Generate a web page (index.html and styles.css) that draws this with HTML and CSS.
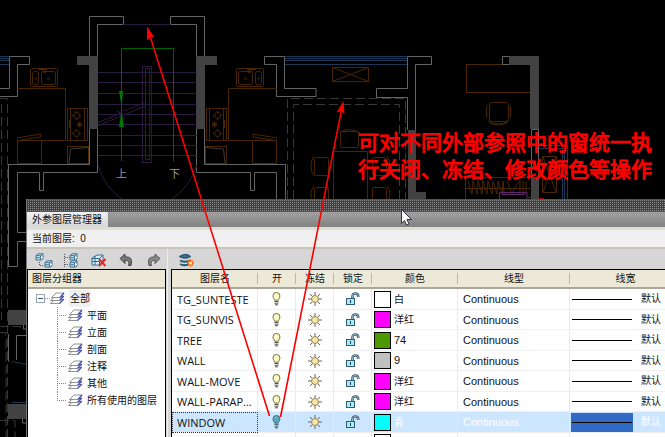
FILE: index.html
```html
<!DOCTYPE html>
<html lang="zh-CN">
<head>
<meta charset="utf-8">
<title>外参图层管理器</title>
<link rel="stylesheet" href="styles.css">
</head>
<body>
<svg width="0" height="0" class="defs" aria-hidden="true">
  <defs>
    <symbol id="bulb" viewBox="0 0 9 14">
      <path d="M2.6 8.2C2.4 6.8 1 6 1 3.9a3.4 3.4 0 0 1 6.9 0C7.900 6 6.500 6.800 6.300 8.200z" fill="#fffbc4" stroke="#77713f"/>
      <path d="M2.500 9.500h4M2.500 11.200h4" stroke="#555"/><path d="M3.200 12.800h2.600" stroke="#333"/>
    </symbol>
    <symbol id="bulb-off" viewBox="0 0 9 14">
      <path d="M2.6 8.200C2.400 6.800 1 6 1 3.900a3.400 3.400 0 0 1 6.900 0C7.900 6 6.500 6.800 6.300 8.200z" fill="#5ba6b8" stroke="#3c7586"/>
      <path d="M2.800 3.200l1-1" stroke="#cdeaf2"/><path d="M2.500 9.500h4M2.500 11.200h4" stroke="#4c6670"/><path d="M3.200 12.800h2.600" stroke="#333"/>
    </symbol>
    <symbol id="sun" viewBox="0 0 14 14">
      <path d="M7 0v3M7 11v3M0 7h3M11 7h3M2 2l2 2M10 10l2 2M12 2l-2 2M4 10l-2 2" stroke="#666"/>
      <circle cx="7" cy="7" r="3.500" fill="#fbe6a0" stroke="#8c8057"/>
    </symbol>
    <symbol id="lock" viewBox="0 0 15 14">
      <path d="M7.500 6V4.500C7.500 2 9 1.500 10.500 1.500S13.300 2.500 13.300 5" fill="none" stroke="#3c5f73" stroke-width="2.600"/>
      <path d="M7.500 6V4.500C7.500 2 9 1.500 10.500 1.500S13.300 2.500 13.300 5" fill="none" stroke="#b7d3e0" stroke-width=".8"/>
      <rect x="1.500" y="6.500" width="8" height="6" fill="#a5ecfa" stroke="#2d5c73"/><path d="M5.500 8v3" stroke="#1c4254"/>
    </symbol>
    <symbol id="sheets" viewBox="0 0 15 13">
      <g fill="#fff" stroke="#777" stroke-width=".8"><path d="M.5 11.500L5 7.500h8.500L9.500 11.500z"/><path d="M.5 8.500L5 4.500h8.500L9.500 8.500z"/><path d="M1.500 5.500L6 1h8L10 5.500z"/></g>
      <path d="M10 5.500L14 1M9.500 8.500l4.300-4.500M9.500 11.500l4.300-4.500" stroke="#4a50a8" stroke-width="1.400"/>
    </symbol>
    <symbol id="group" viewBox="0 0 9 8">
      <path d="M1 2.500L3 .8h5v5L6.500 7H1z" fill="#d7eef8" stroke="#386c8d"/><path d="M1 4.800h4.500M5.500 2.500V7M1 2.700h4.500L8 1" fill="none" stroke="#386c8d"/>
      <path d="M5.800 4.500h2" stroke="#fff"/>
    </symbol>
  </defs>
</svg>

<svg class="drawing" viewBox="0 0 665 437" width="665" height="437" aria-hidden="true">
  <defs>
    <g id="unit">
      <path class="blue" d="M-113 56.500H9M-113 58.500H9M-113 60.500H9M-113 64.500H9"/>
      <path class="wall" d="M9.500 56.500H29.500V64.500H17.500V96.500H-22V88.500H9.500z"/>
      <g class="brown">
        <rect x="30.500" y="68.500" width="27" height="18" rx="1"/>
        <rect x="32.500" y="71.500" width="6" height="13" rx="2"/><rect x="41.500" y="71.500" width="14" height="13" rx="2"/>
        <circle cx="35.500" cy="78.500" r="1"/><circle cx="48.500" cy="78.500" r="1"/>
        <path d="M38 69.500h9M40 69l6 4M44 73l2-4M17 88.500H65.500V140.500H17.500M17.500 139.500V163.500H41.500V139.500M17 138l24-4v3l-20 3"/>
        <rect x="67.500" y="108.500" width="20" height="32"/><path d="M70.500 109v31M84.500 109v31M69.500 120v8"/>
        <circle cx="76.500" cy="115.500" r="3"/><circle cx="79.500" cy="124.500" r="2"/><circle cx="76.500" cy="133.500" r="3"/>
        <path d="M76.500 111v2M76.500 118v2M72 115.500h2M79 115.500h2M76.500 129v2M76.500 136v2M72 133.500h2M79 133.500h2M77 124.500h5M79.500 122v5"/>
        <rect x="67.500" y="146.500" width="21" height="17"/>
      </g>
      <path class="dim" d="M69 163l1.500-14 18-1.500"/>
      <path class="wall" d="M97.500 56V24.500H123.500V16.500H89.500V56M89.500 129V164.500H8.500M97.500 129V172.500H43.500V190.500H39.500V172.500H17.500V200"/>
      <path class="fill" d="M77 56h21v73h-9V65H77z"/>
    </g>
  </defs>
  <use href="#unit"/>
  <use href="#unit" transform="matrix(-1 0 0 1 294 0)"/>
  <path class="wall" d="M8.500 164V266.500H17.500V241.500H27M17.500 200V232.500H27M8.500 334V361.500M16.500 360V335.500H27M23.500 325v4h4M22.500 419v4h5M285.500 164V199"/>
  <path class="fill" d="M8 310h19v15H8zM8 404h19v15H8z"/>
  <path class="blue" d="M12 361.500l15 3M12 402.500h15"/>
  <path class="dash" d="M0 98.500H7.500V437M1.500 104V320M0 326.500H20.500V332M0 332.500H6V437M0 420.500H15V437M287.500 199V98.500H405.500V199M293.500 199V104.500H399.500V199"/>
  <g class="purple">
    <path d="M123 24.500H171M98 72.500H197M98 82.500H197M98 93.500H197M98 104.500H197M98 114.500H197M98 124.500H197M98 135.500H197M98 145.500H197M98 155.500H197M98 122.500L119 114M98 125.500l22-9 2-6M145 102.500L124 111M145 106l-21 9-7-4 8 8"/>
    <path d="M98 165Q104 187 122 199M197 165Q190 187 172 199"/>
    <rect x="142.500" y="66.500" width="9" height="96"/><rect x="145.500" y="68.500" width="4" height="91"/>
  </g>
  <path class="green" d="M121.500 161V48.500H173.500V161"/>
  <path d="M119 91h4l-1 12h-1zM121 114h1l2 13h-5z" fill="#007800"/>
  <text class="stair" x="116" y="178">上</text><text class="stair" x="169" y="178">下</text>
  <g class="brown">
    <path d="M332.500 67.500h36v14h-36zM332.500 67.500l36 14M368.500 67.500l-36 14M333.500 200V151.500H367.500V200"/>
    <rect x="340.500" y="131.500" width="18" height="16" rx="2"/><path d="M339 133q10-7 21 0"/>
    <rect x="314.500" y="157.500" width="14" height="18" rx="2"/><path d="M314 156q-6 10 0 20"/>
    <rect x="314.500" y="187.500" width="14" height="18" rx="2"/><path d="M314 186q-5 7-2 13"/>
    <rect x="372.500" y="157.500" width="14" height="18" rx="2"/><path d="M387 156q6 10 0 20"/>
    <rect x="372.500" y="187.500" width="14" height="18" rx="2"/><path d="M387 186q5 7 2 13"/>
    <rect x="466.500" y="64.500" width="64" height="28"/>
    <rect x="489.500" y="102.500" width="19" height="19" rx="3"/><rect x="486.500" y="105.500" width="3" height="12" rx="1"/><rect x="508.500" y="105.500" width="2" height="12" rx="1"/><path d="M488 121q10 6 21 0M490 123q8 4 17 0"/>
    <path d="M465.500 200V177.500H530M465 188.500H530"/>
    <path d="M468 181l4 13 1-13 4 13 1-13 4 13 1-13 4 13 1-13 4 13 1-13 4 13 1-13 4 13 1-13 1 13M507 181l5 13 3-7 5-6v13M523 181v13M526 181v13"/>
    <path d="M542.500 156.500h14v36h-14zM543 157l13 35M556 157l-13 35"/>
  </g>
  <path class="wall" d="M407.500 130V97.500H376.500V88.500H407.500V56.500H431.500V64.500H415.500V130M509 64.500H502.500V56.500H509M531.500 129.500V177M538.500 177V129.500H531.500"/>
  <path class="fill" d="M408 130h8v62h10v8h-18zM509 56h30v73h-9V65h-21zM531 177h8v22h-8z"/>
  <path class="blue" d="M539 145.500H567.500V199M539 148.500H564.500V199M562.500 149V199"/>
  <path d="M499.500 199V192.500H527V199M502 194.500h23" fill="none" stroke="#5c2866"/>
  <path d="M528 197.500h3M539 198.500h5" stroke="#a00"/>
</svg>

<p class="note">可对不同外部参照中的窗统一执<br>行关闭、冻结、修改颜色等操作</p>

<main class="panel">
  <div class="grip"></div>
  <header class="titlebar"><h1>外参图层管理器</h1></header>
  <div class="current">当前图层: &nbsp;0</div>
  <div class="work">
    <section class="groups">
      <div class="toolbar">
        <button aria-label="新建组"><svg width="18" height="15"><use href="#group" x="0" y="0" width="9" height="8"/><use href="#group" x="9" y="7" width="9" height="8"/><path d="M4.500 9v3.500h4" fill="none" stroke="#555" stroke-dasharray="1 1"/></svg></button>
        <button aria-label="展开组"><svg width="18" height="15"><use href="#group" x="6" y="0" width="9" height="8"/><use href="#group" x="6" y="7" width="9" height="8"/><path d="M1.500 1v13M2 4.500h4M2 11.500h4" fill="none" stroke="#555" stroke-dasharray="1 1"/></svg></button>
        <button aria-label="删除组"><svg width="18" height="15"><path d="M1 5l5-3h6v7l-3 3H1z" fill="#d5edf6" stroke="#386c8d"/><path d="M1 5.500h7.500L12 2M1 8.500h8M8.500 5.500V12M4 3v9" fill="none" stroke="#386c8d"/><path d="M8 6l6.500 7M14.500 6L8 13" stroke="#e22" stroke-width="2"/></svg></button>
        <button aria-label="撤销"><svg width="18" height="15"><path d="M1 5.500L6 1v3h2c4 0 5.500 3 4 8.500H9.500C10.500 9 10 7.500 7.500 7.500H6v3z" fill="#777" stroke="#444"/></svg></button>
        <button aria-label="重做"><svg width="18" height="15"><path d="M13 5.500L8 1v3H6C2 4 .5 7 2 12.500H4.500C3.500 9 4 7.500 6.500 7.500H8v3z" fill="#888" stroke="#555"/></svg></button>
      </div>
      <div class="pane">
        <h2>图层分组器</h2>
        <div class="tree">
          <div class="root"><button class="fold" aria-label="折叠"></button><i></i><svg width="15" height="13"><use href="#sheets"/></svg><span>全部</span></div>
          <ul>
            <li><svg width="15" height="13"><use href="#sheets"/></svg>平面</li>
            <li><svg width="15" height="13"><use href="#sheets"/></svg>立面</li>
            <li><svg width="15" height="13"><use href="#sheets"/></svg>剖面</li>
            <li><svg width="15" height="13"><use href="#sheets"/></svg>注释</li>
            <li><svg width="15" height="13"><use href="#sheets"/></svg>其他</li>
            <li><svg width="15" height="13"><use href="#sheets"/></svg>所有使用的图层</li>
          </ul>
        </div>
      </div>
    </section>
    <section class="layers">
      <div class="toolbar">
        <button aria-label="图层设置"><svg width="18" height="15"><path d="M1 3.500q6-4 10 0-5 3-10 0zM1 7.500q5 3 10 0M1 11q5 3 9 0" fill="#3b6f8a" stroke="#2f5d78" stroke-width="1.600"/><path d="M11.500 6v8M8 10h7M9 7.500l5 5M14 7.500l-5 5" stroke="#f36a1c" stroke-width="1.300"/><circle cx="11.500" cy="10" r="1.500" fill="#fff3a0"/></svg></button>
      </div>
      <div class="pane">
        <table>
          <colgroup><col class="c-name"><col class="c-icon"><col class="c-icon"><col class="c-icon"><col class="c-color"><col class="c-type"><col></colgroup>
          <thead><tr><th>图层名</th><th>开</th><th>冻结</th><th>锁定</th><th>颜色</th><th>线型</th><th class="last">线宽</th></tr></thead>
          <tbody>
            <tr><td class="name">TG_SUNTESTE</td><td><svg width="9" height="14"><use href="#bulb"/></svg></td><td><svg width="14" height="14"><use href="#sun"/></svg></td><td><svg width="15" height="14"><use href="#lock"/></svg></td><td><div class="color"><b class="white"></b>白</div></td><td class="type">Continuous</td><td><div class="weight"><i></i>默认</div></td></tr>
            <tr><td class="name">TG_SUNVIS</td><td><svg width="9" height="14"><use href="#bulb"/></svg></td><td><svg width="14" height="14"><use href="#sun"/></svg></td><td><svg width="15" height="14"><use href="#lock"/></svg></td><td><div class="color"><b class="magenta"></b>洋红</div></td><td class="type">Continuous</td><td><div class="weight"><i></i>默认</div></td></tr>
            <tr><td class="name">TREE</td><td><svg width="9" height="14"><use href="#bulb"/></svg></td><td><svg width="14" height="14"><use href="#sun"/></svg></td><td><svg width="15" height="14"><use href="#lock"/></svg></td><td><div class="color num"><b class="olive"></b>74</div></td><td class="type">Continuous</td><td><div class="weight"><i></i>默认</div></td></tr>
            <tr><td class="name">WALL</td><td><svg width="9" height="14"><use href="#bulb"/></svg></td><td><svg width="14" height="14"><use href="#sun"/></svg></td><td><svg width="15" height="14"><use href="#lock"/></svg></td><td><div class="color num"><b class="silver"></b>9</div></td><td class="type">Continuous</td><td><div class="weight"><i></i>默认</div></td></tr>
            <tr><td class="name">WALL-MOVE</td><td><svg width="9" height="14"><use href="#bulb"/></svg></td><td><svg width="14" height="14"><use href="#sun"/></svg></td><td><svg width="15" height="14"><use href="#lock"/></svg></td><td><div class="color"><b class="magenta"></b>洋红</div></td><td class="type">Continuous</td><td><div class="weight"><i></i>默认</div></td></tr>
            <tr><td class="name">WALL-PARAP...</td><td><svg width="9" height="14"><use href="#bulb"/></svg></td><td><svg width="14" height="14"><use href="#sun"/></svg></td><td><svg width="15" height="14"><use href="#lock"/></svg></td><td><div class="color"><b class="magenta"></b>洋红</div></td><td class="type">Continuous</td><td><div class="weight"><i></i>默认</div></td></tr>
            <tr class="selected"><td class="name">WINDOW</td><td><svg width="9" height="14"><use href="#bulb-off"/></svg></td><td><svg width="14" height="14"><use href="#sun"/></svg></td><td><svg width="15" height="14"><use href="#lock"/></svg></td><td><div class="color"><b class="cyan"></b>青</div></td><td class="type">Continuous</td><td><div class="weight"><i></i>默认</div></td></tr>
            <tr><td></td><td></td><td></td><td></td><td><div class="color"><b class="white"></b></div></td><td></td><td></td></tr>
          </tbody>
        </table>
      </div>
    </section>
  </div>
</main>

<svg class="overlay" viewBox="0 0 665 437" width="665" height="437" aria-hidden="true">
  <path d="M269.500 416L150 36M280.500 417L341.500 110" stroke="#f00" stroke-width="1.600"/>
  <path d="M147 26.500L154.500 37.500 150.500 37 147 40.500zM343.500 101L344.500 114 341 111 336.500 112.500z" fill="#f00"/>
  <path d="M401.500 209.500V223.500L404.500 220.500 406.500 225 409 224 407 219.500H411.500z" fill="#fff" stroke="#34343c"/>
</svg>
</body>
</html>
```

FILE: styles.css
```css
* { box-sizing: border-box; }
body {
  margin: 0;
  height: 100vh;
  display: flex;
  flex-direction: column;
  position: relative;
  overflow: hidden;
  background: #000;
  color: #111;
  font: 10px/16px "Liberation Sans", "Noto Sans CJK SC", sans-serif;
}
.defs { position: absolute; }
.drawing, .overlay { position: absolute; top: 0; left: 0; }
.overlay { pointer-events: none; }
.wall, .dim, .brown, .purple, .green, .blue, .dash { fill: none; }
.wall { stroke: #646464; }
.dim { stroke: #3c3c3c; }
.fill { fill: #424242; }
.brown { stroke: #4a2600; }
.purple { stroke: #2c1b3e; }
.green { stroke: #006400; }
.blue { stroke: #1b3854; }
.dash { stroke: #383838; stroke-dasharray: 9 4; }
.stair { fill: #999; font-size: 11px; }

.note {
  position: absolute;
  top: 128px;
  right: 13px;
  margin: 0;
  color: #f00;
  font: 21px/27px "Noto Sans CJK SC", sans-serif;
  -webkit-text-stroke: 1px #f00;
  white-space: nowrap;
}

.panel {
  position: relative;
  flex: 1;
  display: flex;
  flex-direction: column;
  margin: 199px 0 0 26px;
  border-left: 1px solid #777;
  background: #d6d6d6;
}
.grip {
  height: 13px;
  border-top: 1px solid #555;
  border-bottom: 1px solid #555;
  background: conic-gradient(#8c8c8c 25%, #404040 0) 0 0 / 2px 2px;
}
.titlebar {
  display: flex;
  height: 15px;
  background: linear-gradient(#a0a0a0, #828282);
}
h1, h2 { margin: 0; font-size: 10px; font-weight: normal; }
h1 {
  padding: 0 5px;
  line-height: 15px;
  border-right: 1px solid #ddd;
  background: linear-gradient(#f2f2f2, #d6d6d6);
}
.current {
  height: 22px;
  padding: 0 5px;
  line-height: 17px;
  border-top: 3px solid #e0ddd2;
  border-bottom: 2px solid #c9c5b8;
  background: #f0f0f0;
}
.work { flex: 1; display: flex; min-height: 0; }
.groups { width: 141px; display: flex; flex-direction: column; border-right: 1px solid #eee; }
.layers { flex: 1; min-width: 0; display: flex; flex-direction: column; margin-left: 3px; }
.toolbar { display: flex; gap: 10px; height: 20px; padding: 4px 0 0 8px; }
button { padding: 0; border: 0; background: none; }
.toolbar button { height: 15px; width: 18px; }
svg { display: block; }
.pane { flex: 1; min-height: 0; background: #fff; border: 1px solid #000; border-bottom: 0; }
.groups .pane { margin-right: 1px; }
.layers .pane { border-right: 0; }
h2, th {
  height: 19px;
  line-height: 17px;
  background: #ece9d8;
  border-bottom: 2px solid #aca899;
}
h2 { padding-left: 4px; }
.tree { padding: 1px 0 0 8px; line-height: 17px; }
.root, li { display: flex; align-items: center; height: 17px; }
.fold {
  width: 9px;
  height: 9px;
  border: 1px solid #9aa4ae;
  background: linear-gradient(#356, #356) center / 5px 1px no-repeat;
}
.root i { width: 5px; border-top: 1px dotted #888; }
.root span { margin-left: 4px; padding: 0 1px; background: #f0f0f0; }
ul { margin: 0 0 0 21px; padding: 0; list-style: none; }
li {
  gap: 4px;
  background:
    repeating-linear-gradient(#888 0 1px, transparent 1px 2px) 0 0 / 1px 100% no-repeat,
    repeating-linear-gradient(90deg, #888 0 1px, transparent 1px 2px) 0 50% / 10px 1px no-repeat;
  padding-left: 11px;
}
li:last-child { background-size: 1px 50%, 10px 1px; }

table { width: 100%; table-layout: fixed; border-collapse: separate; border-spacing: 0; }
.c-name { width: 86px; }
.c-icon { width: 38px; }
.c-color { width: 86px; }
.c-type { width: 112px; }
th, td { padding: 0; }
th {
  font-weight: normal;
  background: #ece9d8 linear-gradient(#bbb7a6, #bbb7a6) right center / 1px 11px no-repeat;
}
th.last { padding-left: 16px; background: #ece9d8; }
td { height: 20px; border-right: 1px solid #e6ebf2; border-bottom: 1px solid #eef0f3; }
td:last-child { border-right: 0; }
tr:nth-child(odd) td { height: 21px; }
td svg { margin: 0 auto; }
.name { padding-left: 5px; font: 11px/15px "Open Sans", "Noto Sans", sans-serif; white-space: nowrap; }
.type, .num { font-size: 11px; }
.type { padding-left: 5px; }
.color { display: flex; align-items: center; gap: 3px; padding-left: 2px; line-height: 17px; }
.color b { width: 17px; height: 17px; border: 1px solid #000; }
.white { background: #fff; }
.magenta { background: #f0f; }
.olive { background: #4c9900; }
.silver { background: #c0c0c0; }
.cyan { background: #0ff; }
.weight { display: flex; align-items: center; gap: 8px; padding-left: 1px; white-space: nowrap; }
.weight i {
  width: 62px;
  height: 19px;
  background: linear-gradient(#000, #000) center / 60px 1px no-repeat;
}
.selected td { background: #cce6ff; color: #fff; }
.selected .name { color: #111; outline: 1px dotted #333; outline-offset: -1px; }
.selected .weight i { background-color: #316ac5; }
```
